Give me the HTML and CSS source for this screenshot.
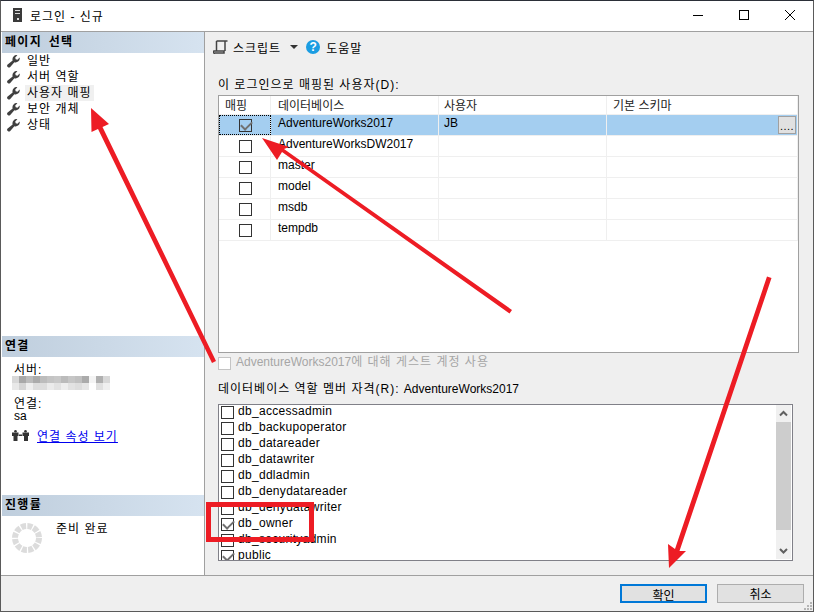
FILE: index.html
```html
<!DOCTYPE html>
<html lang="ko">

<head>
    <meta charset="UTF-8">
    <title>로그인 - 신규</title>
    <link rel="stylesheet" href="styles.css">
</head>

<body>
    <div class="window">
        <div class="titlebar">
            <svg class="app-icon" width="9" height="14" viewBox="0 0 9 14">
                <rect x="0" y="0" width="9" height="14" fill="#3a3a3a"/>
                <rect x="2" y="2" width="5" height="1" fill="#ddd"/>
                <rect x="2" y="5" width="5" height="1" fill="#ddd"/>
                <rect x="4" y="10" width="2" height="2" fill="#ddd"/>
            </svg>
            <span class="title-text">로그인 - 신규</span>
            <div class="win-buttons">
                <svg width="12" height="12" viewBox="0 0 12 12"><path d="M1 6.500h10" stroke="#000"/></svg>
                <svg width="12" height="12" viewBox="0 0 12 12"><rect x="1.500" y="1.500" width="9" height="9" fill="none" stroke="#000"/></svg>
                <svg width="12" height="12" viewBox="0 0 12 12"><path d="M1 1l10 10M11 1L1 11" stroke="#000"/></svg>
            </div>
        </div>

        <div class="main">
            <div class="side">
                <div class="side-head">페이지 선택</div>
                <ul class="pages">
                    <li><svg class="wrench" viewBox="0 0 12 12"><use href="#wrench"/></svg><span>일반</span></li>
                    <li><svg class="wrench" viewBox="0 0 12 12"><use href="#wrench"/></svg><span>서버 역할</span></li>
                    <li class="current"><svg class="wrench" viewBox="0 0 12 12"><use href="#wrench"/></svg><span>사용자 매핑</span></li>
                    <li><svg class="wrench" viewBox="0 0 12 12"><use href="#wrench"/></svg><span>보안 개체</span></li>
                    <li><svg class="wrench" viewBox="0 0 12 12"><use href="#wrench"/></svg><span>상태</span></li>
                </ul>

                <div class="side-head">연결</div>
                <div class="conn">
                    <div class="conn-label">서버:</div>
                    <svg class="mosaic" width="98" height="14" viewBox="0 0 14 2" shape-rendering="crispEdges">
                        <rect width="14" height="2" fill="#fff"/>
                        <rect x="0" y="0" width="1" height="1" fill="#d8d8d8"/><rect x="1" y="0" width="1" height="1" fill="#a8a8a8"/>
                        <rect x="2" y="0" width="1" height="1" fill="#bcbcbc"/><rect x="3" y="0" width="1" height="1" fill="#ababab"/>
                        <rect x="4" y="0" width="1" height="1" fill="#bcbcbc"/><rect x="5" y="0" width="1" height="1" fill="#c4c4c4"/>
                        <rect x="6" y="0" width="1" height="1" fill="#c8c8c8"/><rect x="7" y="0" width="1" height="1" fill="#bbb"/>
                        <rect x="8" y="0" width="1" height="1" fill="#c6c6c6"/><rect x="9" y="0" width="1" height="1" fill="#c0c0c0"/>
                        <rect x="10" y="0" width="1" height="1" fill="#ababab"/><rect x="11" y="0" width="1" height="1" fill="#f4f4f4"/>
                        <rect x="12" y="0" width="1" height="1" fill="#b0b0b0"/><rect x="13" y="0" width="1" height="1" fill="#d8d8d8"/>
                        <rect x="0" y="1" width="1" height="1" fill="#e8e8e8"/><rect x="1" y="1" width="1" height="1" fill="#d4d4d4"/>
                        <rect x="2" y="1" width="1" height="1" fill="#eee"/><rect x="3" y="1" width="1" height="1" fill="#ddd"/>
                        <rect x="4" y="1" width="1" height="1" fill="#ddd"/><rect x="5" y="1" width="1" height="1" fill="#ebebeb"/>
                        <rect x="6" y="1" width="1" height="1" fill="#e2e2e2"/><rect x="7" y="1" width="1" height="1" fill="#eee"/>
                        <rect x="8" y="1" width="1" height="1" fill="#e2e2e2"/><rect x="9" y="1" width="1" height="1" fill="#ddd"/>
                        <rect x="10" y="1" width="1" height="1" fill="#e6e6e6"/><rect x="12" y="1" width="1" height="1" fill="#e0e0e0"/>
                        <rect x="13" y="1" width="1" height="1" fill="#efefef"/>
                    </svg>
                    <div class="conn-label second">연결:</div>
                    <div class="conn-value">sa</div>
                    <div class="conn-link">
                        <svg width="17" height="11" viewBox="0 0 17 11"><path d="M0 2.500h6.500v3.500H5.500v5H1.500V6H0zM7 4.500h3v1.500H7zM10.500 2.500H17V6h-1v5h-4V6h-1.500z" fill="#333"/><circle cx="3.500" cy="1.300" r="1.300" fill="#333"/><circle cx="13.500" cy="1.300" r="1.300" fill="#333"/></svg>
                        <a href="#">연결 속성 보기</a>
                    </div>
                </div>

                <div class="side-head">진행률</div>
                <div class="progress">
                    <svg width="30" height="30" viewBox="0 0 30 30"><circle cx="15" cy="15" r="12" fill="none" stroke="#dcdcdc" stroke-width="6" stroke-dasharray="5 1.283"/></svg>
                    <span>준비 완료</span>
                </div>
            </div>

            <div class="content">
                <div class="toolbar">
                    <svg width="15" height="14" viewBox="0 0 15 14"><path d="M3.500 1h11M3.500 1v10M12 1v10M1 11h10v2H2a1 1 0 0 1-1-2z" fill="none" stroke="#444" stroke-width="1.500"/></svg>
                    <span class="tool-text">스크립트</span>
                    <span class="caret"></span>
                    <span class="help">?</span>
                    <span class="tool-text">도움말</span>
                </div>

                <div class="label">이 로그인으로 매핑된 사용자(D):</div>
                <div class="grid-box">
                    <div class="grid-row grid-head">
                        <div>매핑</div><div>데이터베이스</div><div>사용자</div><div>기본 스키마</div>
                    </div>
                    <div class="grid-row selected">
                        <div class="check-cell focus"><span class="check on"></span></div>
                        <div>AdventureWorks2017</div><div>JB</div>
                        <div class="schema-cell"><span class="more">....</span></div>
                    </div>
                    <div class="grid-row"><div class="check-cell"><span class="check"></span></div><div>AdventureWorksDW2017</div><div></div><div></div></div>
                    <div class="grid-row"><div class="check-cell"><span class="check"></span></div><div>master</div><div></div><div></div></div>
                    <div class="grid-row"><div class="check-cell"><span class="check"></span></div><div>model</div><div></div><div></div></div>
                    <div class="grid-row"><div class="check-cell"><span class="check"></span></div><div>msdb</div><div></div><div></div></div>
                    <div class="grid-row"><div class="check-cell"><span class="check"></span></div><div>tempdb</div><div></div><div></div></div>
                </div>

                <div class="guest"><span class="check off"></span><span class="guest-text">AdventureWorks2017<span class="ko">에 대해 게스트 계정 사용</span></span></div>

                <div class="label role-label">데이터베이스 역할 멤버 자격(R): <span class="latin">AdventureWorks2017</span></div>
                <div class="role-box">
                    <ul class="roles">
                        <li><span class="check"></span>db_accessadmin</li>
                        <li><span class="check"></span>db_backupoperator</li>
                        <li><span class="check"></span>db_datareader</li>
                        <li><span class="check"></span>db_datawriter</li>
                        <li><span class="check"></span>db_ddladmin</li>
                        <li><span class="check"></span>db_denydatareader</li>
                        <li><span class="check"></span>db_denydatawriter</li>
                        <li><span class="check on"></span>db_owner</li>
                        <li><span class="check"></span>db_securityadmin</li>
                        <li><span class="check on"></span>public</li>
                    </ul>
                    <div class="scrollbar">
                        <svg width="15" height="17" viewBox="0 0 15 17"><path d="M4 10.500l3.500-3.500L11 10.500" fill="none" stroke="#606060" stroke-width="2"/></svg>
                        <div class="thumb"></div>
                        <svg class="arrow-down" width="15" height="17" viewBox="0 0 15 17"><path d="M4 7l3.500 3.500L11 7" fill="none" stroke="#606060" stroke-width="2"/></svg>
                    </div>
                </div>
            </div>
        </div>

        <div class="footer">
            <button class="btn default">확인</button>
            <button class="btn">취소</button>
            <svg class="grip" width="10" height="10" viewBox="0 0 10 10"><path d="M7 1h2v2H7zM4 4h2v2H4zM7 4h2v2H7zM1 7h2v2H1zM4 7h2v2H4zM7 7h2v2H7z" fill="#b4b4b4"/></svg>
        </div>
    </div>

    <!-- annotations drawn on top of the screenshot -->
    <svg class="marks" width="814" height="612" viewBox="0 0 814 612">
        <g fill="#ed1c24" stroke="none">
            <path d="M91 108L109 124L102.500 127L216 361L212 363L98 129L91.500 132z"/>
            <path d="M512 310L509.500 313.500L282 152L277 160L262 138L289 147L284 149z"/>
            <path d="M771.500 278L679.500 551L686 551L669 568L668 544L675 549L767 276.500z"/>
        </g>
        <rect x="208.500" y="504.500" width="103" height="35" fill="none" stroke="#ed1c24" stroke-width="5"/>
    </svg>

    <svg width="0" height="0" class="defs">
        <symbol id="wrench" viewBox="0 0 12 12">
            <path d="M11.800 3a3.800 3.800 0 0 1-5 3.600L3 11a1.600 1.600 0 0 1-2.400-2.200L5.200 5A3.800 3.800 0 0 1 9.600.2L7.600 2.300l.4 1.700 1.700.4 1.900-2z" fill="#404040"/>
        </symbol>
    </svg>
</body>

</html>
```

FILE: styles.css
```css
* {
    box-sizing: border-box;
}

html, body {
    margin: 0;
    padding: 0;
}

body {
    width: 814px;
    height: 612px;
    overflow: hidden;
    position: relative;
    font-family: "Liberation Sans", "Noto Sans CJK KR", sans-serif;
    font-size: 12px;
    color: #000;
    background: #f0f0f0;
}

/* korean text runs at a 12px pitch in the dialog */
.title-text,
.pages span,
.conn-label,
.conn-link a,
.progress span,
.tool-text,
.label,
.ko {
    letter-spacing: 1px;
}

.latin {
    letter-spacing: 0;
}

.window {
    display: flex;
    flex-direction: column;
    width: 814px;
    height: 612px;
    border: 1px solid #5a5a5a;
    border-top-color: #2b2f38;
}

/* title bar */
.titlebar {
    display: flex;
    align-items: center;
    height: 31px;
    flex: none;
    background: #fff;
    border-bottom: 1px solid #a0a0a0;
    padding: 0 0 2px 12px;
}

.title-text {
    margin-left: 8px;
}

.win-buttons {
    display: flex;
    gap: 34px;
    margin-left: auto;
    margin-right: 17px;
}

/* left panel */
.main {
    display: flex;
    flex: 1;
    min-height: 0;
}

.side {
    display: flex;
    flex-direction: column;
    width: 204px;
    flex: none;
    background: #fff;
    border-right: 1px solid #a0a0a0;
}

.side-head {
    height: 21px;
    line-height: 21px;
    flex: none;
    margin-left: 1px;
    padding-left: 3px;
    font-weight: bold;
    letter-spacing: 1.3px;
    word-spacing: 2px;
    background: linear-gradient(to right, #bfcedd, #d6e3f0);
}

.pages {
    list-style: none;
    margin: 0;
    padding: 0 0 0 6px;
    height: 283px;
    flex: none;
}

.pages li {
    display: flex;
    align-items: center;
    height: 16px;
    gap: 5px;
}

.pages span {
    padding: 0 2px;
    line-height: 16px;
}

.pages li.current span {
    background: #f0f0f0;
}

.wrench {
    width: 13px;
    height: 13px;
    flex: none;
}

.conn {
    height: 138px;
    flex: none;
    padding: 6px 0 0 13px;
}

.conn-label {
    line-height: 15px;
}

.conn-label.second {
    margin-top: 7px;
}

.conn-value {
    line-height: 9px;
}

.mosaic {
    display: block;
    margin: -2px 0 0 -2px;
}

.conn-link {
    display: flex;
    align-items: center;
    gap: 8px;
    margin: 6px 0 0 -2px;
}

.conn-link a {
    color: #0000ee;
}

.progress {
    display: flex;
    align-items: flex-start;
    flex: 1;
    padding-left: 11px;
    gap: 14px;
}

.progress svg {
    margin-top: 7px;
}

.progress span {
    margin-top: 5px;
    line-height: 16px;
}

/* right panel */
.content {
    flex: 1;
    min-width: 0;
    padding: 0 14px 0 13px;
    background: #efefef;
}

.toolbar {
    display: flex;
    align-items: center;
    height: 30px;
    margin-left: -5px;
}

.toolbar svg {
    margin-right: 5px;
}

.caret {
    width: 0;
    height: 0;
    border-left: 4px solid transparent;
    border-right: 4px solid transparent;
    border-top: 4px solid #333;
    margin: 0 8px 0 9px;
}

.help {
    display: inline-block;
    width: 14px;
    height: 14px;
    margin-right: 6px;
    border-radius: 50%;
    background: #1b9de2;
    color: #fff;
    font-weight: bold;
    line-height: 14px;
    text-align: center;
}

.label {
    margin-top: 13px;
    height: 20px;
    line-height: 20px;
    white-space: nowrap;
}

.grid-box {
    width: 581px;
    height: 258px;
    background: #fff;
    border: 1px solid #a0a0a0;
}

.grid-row {
    display: grid;
    grid-template-columns: 52px 168px 168px 1fr;
    height: 21px;
    border-bottom: 1px solid #efefef;
}

.grid-row > div {
    display: flex;
    align-items: center;
    padding: 0 0 4px 6px;
    border-right: 1px solid #efefef;
    white-space: nowrap;
}

.grid-row > div:nth-child(2) {
    padding-left: 7px;
}

.grid-row > div:nth-child(3) {
    padding-left: 5px;
}

.grid-head {
    height: 19px;
}

.grid-head > div {
    color: #222;
    padding-bottom: 6px;
}

.selected {
    background: #a4cef0;
}

.grid-row > .check-cell {
    padding: 0 0 0 1px;
    justify-content: center;
}

.focus {
    outline: 1px dotted #000;
    outline-offset: -1px;
}

.grid-row > .schema-cell {
    justify-content: flex-end;
    padding: 0 1px 0 0;
}

.more {
    width: 18px;
    height: 18px;
    background: #e1e1e1;
    border: 1px solid #a0a0a0;
    text-align: center;
    line-height: 19px;
    font-size: 11px;
    letter-spacing: 0.5px;
}

.check {
    display: inline-block;
    position: relative;
    width: 13px;
    height: 13px;
    flex: none;
    background: #fff;
    border: 1px solid #333;
}

.selected .check {
    background: #a4cef0;
}

.check.on::after {
    content: "";
    position: absolute;
    left: 1px;
    top: 1px;
    width: 9px;
    height: 5px;
    border-left: 2px solid #707070;
    border-bottom: 2px solid #707070;
    transform: rotate(-45deg);
}

.check.off {
    margin-top: 4px;
    border-color: #c4c4c4;
}

.guest {
    display: flex;
    align-items: flex-start;
    gap: 5px;
    height: 26px;
    color: #a6a6a6;
}

.guest-text {
    margin-top: 2px;
    line-height: 14px;
}

.role-label {
    margin-top: 0;
    height: 20px;
}

.role-box {
    display: flex;
    width: 575px;
    height: 157px;
    margin-top: 5px;
    background: #fff;
    border: 1px solid #808088;
    overflow: hidden;
}

.roles {
    flex: 1;
    list-style: none;
    margin: 0;
    padding: 0 0 0 2px;
}

.roles li {
    display: flex;
    align-items: flex-start;
    gap: 4px;
    height: 16px;
    line-height: 13px;
    letter-spacing: 0.3px;
    white-space: nowrap;
}

.roles .check {
    margin-top: 1px;
}

.scrollbar {
    display: flex;
    flex-direction: column;
    width: 15px;
    margin: 0 1px 1px 0;
    background: #f0f0f0;
}

.thumb {
    height: 108px;
    flex: none;
    background: #cdcdcd;
}

.scrollbar svg {
    flex: none;
}

.arrow-down {
    margin-top: auto;
}

/* footer */
.footer {
    display: flex;
    justify-content: flex-end;
    align-items: flex-start;
    gap: 10px;
    height: 36px;
    flex: none;
    padding: 8px 9px 0 0;
    background: #efefef;
    border-top: 1px solid #a0a0a0;
    position: relative;
}

.btn {
    width: 87px;
    height: 19px;
    padding: 0;
    font: inherit;
    background: #e1e1e1;
    border: 1px solid #adadad;
}

.btn.default {
    border: 2px solid #0078d7;
}

.grip {
    position: absolute;
    right: 0;
    bottom: 0;
}

.marks {
    position: absolute;
    left: 0;
    top: 0;
    pointer-events: none;
}

.defs {
    position: absolute;
}
```
